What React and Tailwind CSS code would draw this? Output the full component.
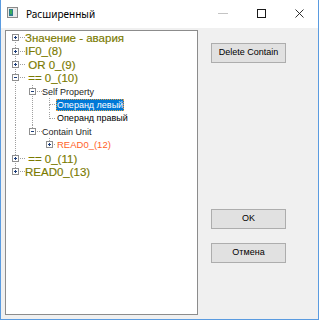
const ROW_H = 13.4;
const COL = 17;
const C0 = 9;
const TEXT_X = [19, 36, 50];

const rows = [
  { label: "Значение - авария", level: 0, box: "+", kind: "root", up: false, down: true, cont: [] },
  { label: "IF0_(8)", level: 0, box: "+", kind: "root", up: true, down: true, cont: [] },
  { label: " OR 0_(9)", level: 0, box: "+", kind: "root", up: true, down: true, cont: [] },
  { label: " == 0_(10)", level: 0, box: "-", kind: "root", up: true, down: true, cont: [] },
  { label: "Self Property", level: 1, box: "-", kind: "small", up: true, down: true, cont: [true] },
  { label: "Операнд левый", level: 2, kind: "selected", up: true, down: true, cont: [true, true] },
  { label: "Операнд правый", level: 2, kind: "leaf", up: true, down: false, cont: [true, true] },
  { label: "Contain Unit", level: 1, box: "-", kind: "small", up: true, down: false, cont: [true] },
  { label: "READ0_(12)", level: 2, box: "+", kind: "orange", up: true, down: false, cont: [true, false] },
  { label: " == 0_(11)", level: 0, box: "+", kind: "root", up: true, down: true, cont: [] },
  { label: "READ0_(13)", level: 0, box: "+", kind: "root", up: true, down: false, cont: [] },
];

function TreeLines({ row }) {
  const w = TEXT_X[row.level];
  const px = C0 + row.level * COL;
  const x = px + 0.5;
  const mid = 6.5;
  const dot = { stroke: "#a0a0a0", strokeDasharray: "1 1", strokeWidth: 1 };
  return (
    <svg width={w} height={ROW_H} className="shrink-0" shapeRendering="crispEdges">
      {row.cont.map((c, i) =>
        c ? <line key={i} x1={C0 + i * COL + 0.5} x2={C0 + i * COL + 0.5} y1={0} y2={ROW_H} {...dot} /> : null
      )}
      {row.up && <line x1={x} x2={x} y1={0} y2={mid} {...dot} />}
      {row.down && <line x1={x} x2={x} y1={mid} y2={ROW_H} {...dot} />}
      <line x1={x} x2={w} y1={mid} y2={mid} {...dot} />
      {row.box && (
        <g>
          <rect x={px - 3 + 0.5} y={3.5} width={6} height={6} fill="#fff" stroke="#8f8f8f" />
          <line x1={px - 1} x2={px + 2} y1={mid} y2={mid} stroke="#1c3d7a" />
          {row.box === "+" && <line x1={x} x2={x} y1={5} y2={8} stroke="#1c3d7a" />}
        </g>
      )}
    </svg>
  );
}

function TreeRow({ row }) {
  const text = {
    root: "text-[11.5px] text-[#7a7a00] [-webkit-text-stroke:0.15px_#7a7a00]",
    small: "text-[9px] text-[#1e1e1e]",
    leaf: "text-[9px] text-black pl-[1px]",
    orange: "text-[9.5px] text-[#ff5f1f] pl-[1px]",
    selected: "text-[9px] text-white bg-[#0078d7] outline outline-1 outline-dotted outline-[#e8a040] -outline-offset-1 px-[1px]",
  }[row.kind];
  return (
    <div className="flex items-center h-[13.4px]">
      <TreeLines row={row} />
      <span className={`whitespace-pre leading-[12px] ${text}`}>{row.label}</span>
    </div>
  );
}

function Button({ children, className = "" }) {
  return (
    <div className={`w-[75px] h-[20px] bg-[#e1e1e1] border border-[#adadad] flex items-center justify-center text-[9px] text-black ${className}`}>
      {children}
    </div>
  );
}

export default function App() {
  return (
    <div
      className="w-[319px] h-[320px] bg-[#f0f0f0] border-x border-b border-[#5a9be0] flex flex-col"
      style={{ fontFamily: '"Liberation Sans", Arial, sans-serif' }}
    >
      <div className="h-[28px] bg-white flex items-center shrink-0">
        <svg width="11" height="11" className="ml-[6px] -mt-[3px]" shapeRendering="crispEdges">
          <rect x="0.5" y="0.5" width="10" height="10" fill="#e9e9e9" stroke="#8a8a8a" />
          <rect x="2" y="2" width="4" height="7" fill="#2e7d8c" />
          <rect x="3" y="3" width="2" height="4" fill="#3cb05a" />
        </svg>
        <span className="ml-[8px] text-[10px] text-black" style={{ fontFamily: '"Noto Sans", sans-serif' }}>
          Расширенный
        </span>
        <div className="ml-auto flex h-full">
          <div className="w-[38px] flex items-center justify-center">
            <svg width="10" height="10" className="-mt-[3px]" shapeRendering="crispEdges">
              <line x1="0" x2="10" y1="5.5" y2="5.5" stroke="#c4c4c4" />
            </svg>
          </div>
          <div className="w-[38px] flex items-center justify-center">
            <svg width="9" height="9" className="-mt-[1px]" shapeRendering="crispEdges">
              <rect x="0.5" y="0.5" width="8" height="8" fill="none" stroke="#1a1a1a" />
            </svg>
          </div>
          <div className="w-[38px] flex items-center justify-center">
            <svg width="9" height="9" className="-mt-[1px]">
              <path d="M0.5 0.5 L8.5 8.5 M8.5 0.5 L0.5 8.5" stroke="#1a1a1a" strokeWidth="0.9" />
            </svg>
          </div>
        </div>
      </div>
      <div className="flex flex-1 pt-[2px] pb-[4px] pl-[4px]">
        <div className="w-[193px] h-full border border-[#8c8c8c] bg-white pt-[0.3px]">
          {rows.map((r, i) => (
            <TreeRow key={i} row={r} />
          ))}
        </div>
        <div className="flex flex-col ml-[13px] pt-[13px]">
          <Button>Delete Contain</Button>
          <Button className="mt-[146px]">OK</Button>
          <Button className="mt-[14px]">Отмена</Button>
        </div>
      </div>
    </div>
  );
}
